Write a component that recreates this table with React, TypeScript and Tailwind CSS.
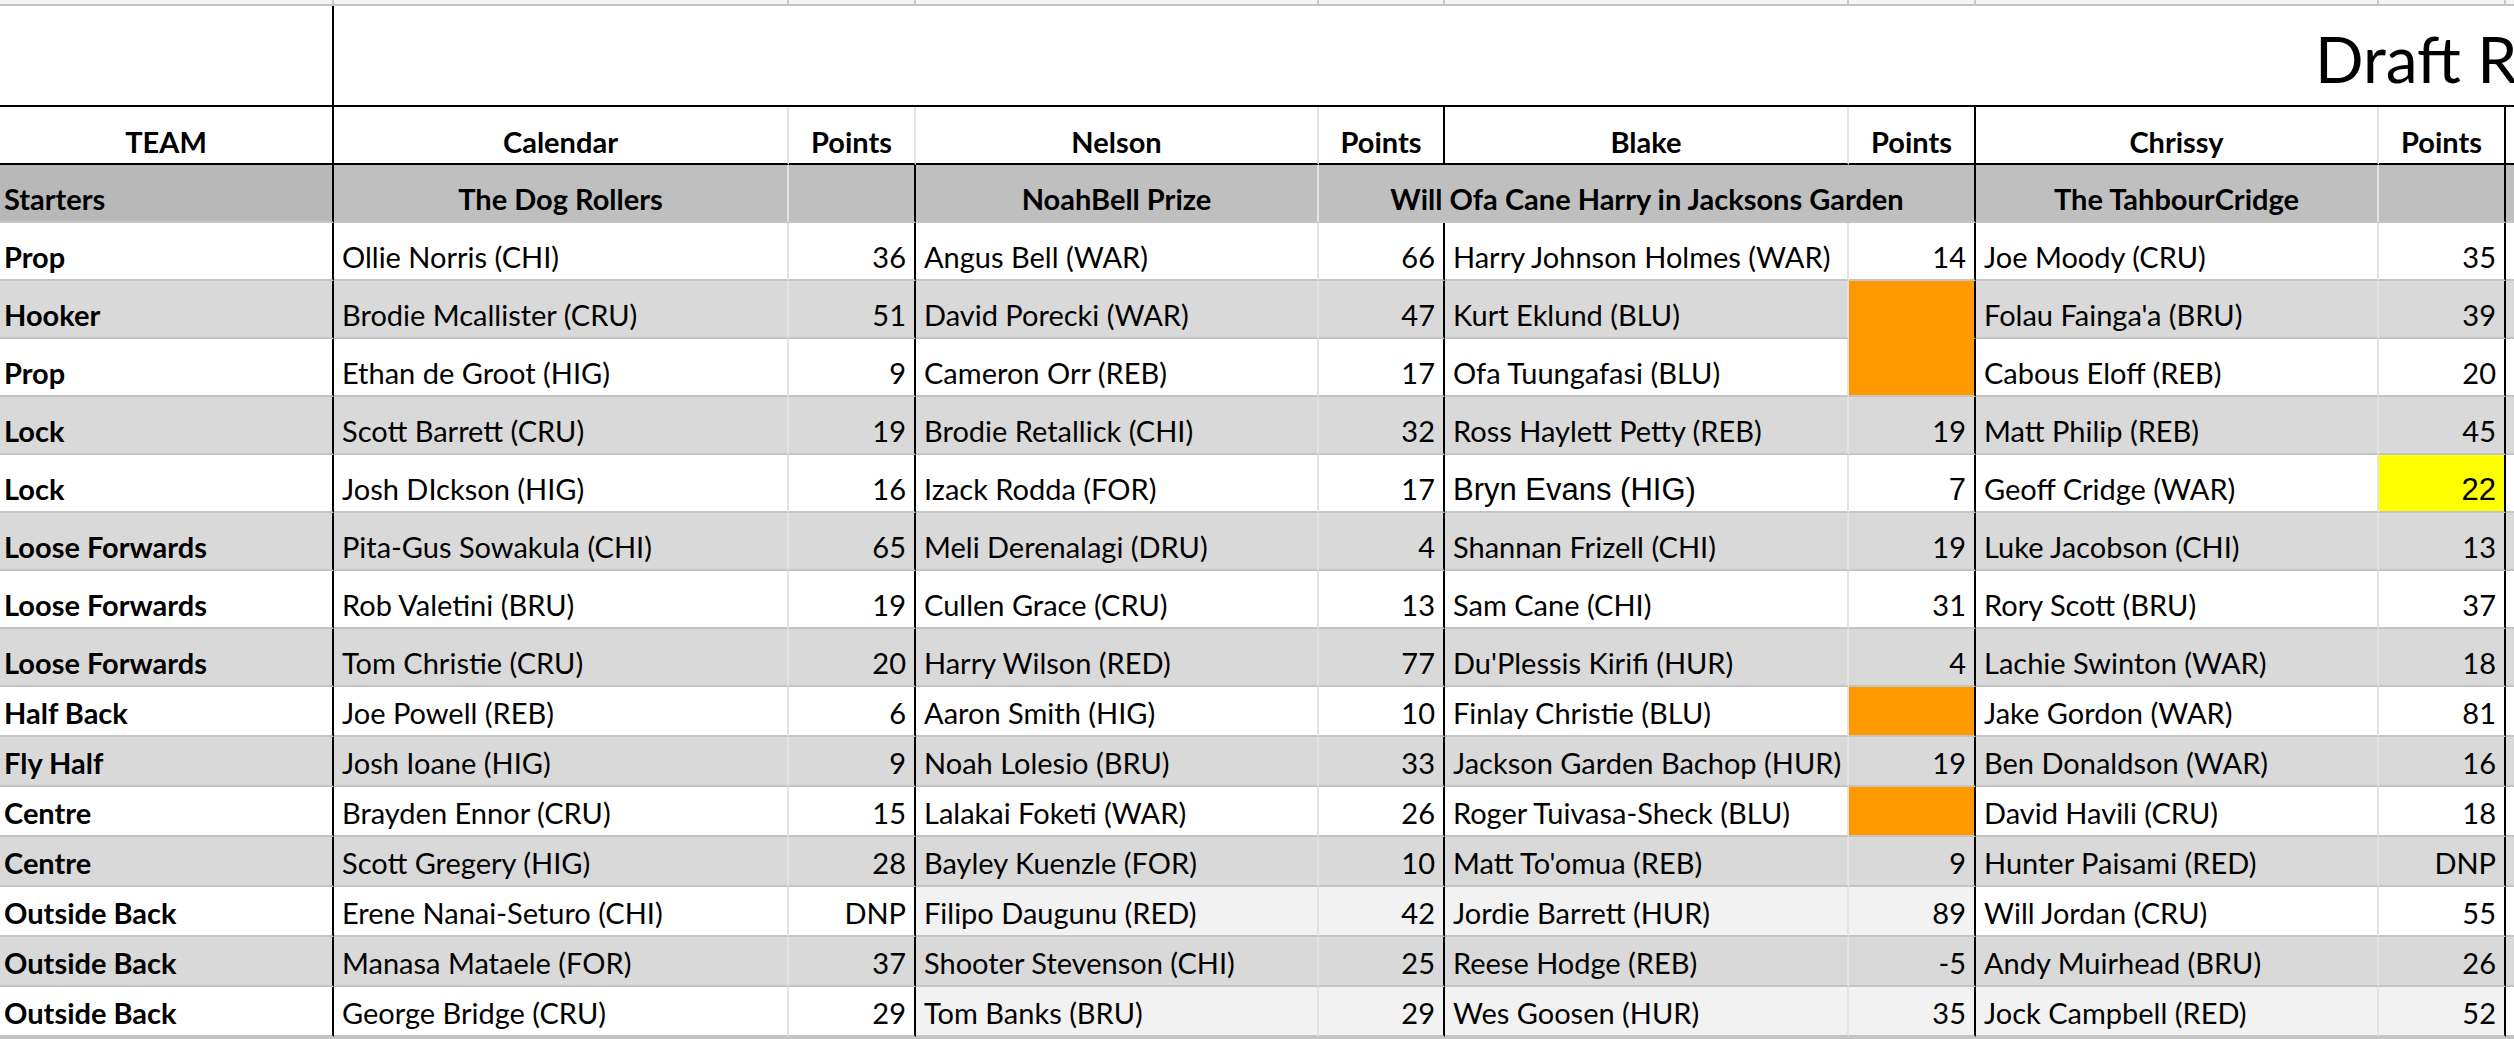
import clsx from "clsx";

// column widths, left to right (last filler column takes the rest)
const W = [
  "w-[334px]",
  "w-[455px]",
  "w-[127px]",
  "w-[403px]",
  "w-[126px]",
  "w-[404px]",
  "w-[127px]",
  "w-[403px]",
  "w-[127px]",
];

const BK = "border-r-2 border-r-black";
const LT = "border-r-2 border-r-[#e3e3e3]";

const GRID = [BK, LT, BK, LT, BK, LT, BK, LT, BK];
const HEAD = [BK, LT, LT, LT, BK, LT, BK, LT, BK];

const ARIAL = "[font-family:Liberation_Sans,Arial,sans-serif] text-[31px]";

const rows: string[][] = [
  ["Prop", "Ollie Norris (CHI)", "36", "Angus Bell (WAR)", "66", "Harry Johnson Holmes (WAR)", "14", "Joe Moody (CRU)", "35"],
  ["Hooker", "Brodie Mcallister (CRU)", "51", "David Porecki (WAR)", "47", "Kurt Eklund (BLU)", "", "Folau Fainga'a (BRU)", "39"],
  ["Prop", "Ethan de Groot (HIG)", "9", "Cameron Orr (REB)", "17", "Ofa Tuungafasi (BLU)", "", "Cabous Eloff (REB)", "20"],
  ["Lock", "Scott Barrett (CRU)", "19", "Brodie Retallick (CHI)", "32", "Ross Haylett Petty (REB)", "19", "Matt Philip (REB)", "45"],
  ["Lock", "Josh DIckson (HIG)", "16", "Izack Rodda (FOR)", "17", "Bryn Evans (HIG)", "7", "Geoff Cridge (WAR)", "22"],
  ["Loose Forwards", "Pita-Gus Sowakula (CHI)", "65", "Meli Derenalagi (DRU)", "4", "Shannan Frizell (CHI)", "19", "Luke Jacobson (CHI)", "13"],
  ["Loose Forwards", "Rob Valetini (BRU)", "19", "Cullen Grace (CRU)", "13", "Sam Cane (CHI)", "31", "Rory Scott (BRU)", "37"],
  ["Loose Forwards", "Tom Christie (CRU)", "20", "Harry Wilson (RED)", "77", "Du'Plessis Kirifi (HUR)", "4", "Lachie Swinton (WAR)", "18"],
  ["Half Back", "Joe Powell (REB)", "6", "Aaron Smith (HIG)", "10", "Finlay Christie (BLU)", "", "Jake Gordon (WAR)", "81"],
  ["Fly Half", "Josh Ioane (HIG)", "9", "Noah Lolesio (BRU)", "33", "Jackson Garden Bachop (HUR)", "19", "Ben Donaldson (WAR)", "16"],
  ["Centre", "Brayden Ennor (CRU)", "15", "Lalakai Foketi (WAR)", "26", "Roger Tuivasa-Sheck (BLU)", "", "David Havili (CRU)", "18"],
  ["Centre", "Scott Gregery (HIG)", "28", "Bayley Kuenzle (FOR)", "10", "Matt To'omua (REB)", "9", "Hunter Paisami (RED)", "DNP"],
  ["Outside Back", "Erene Nanai-Seturo (CHI)", "DNP", "Filipo Daugunu (RED)", "42", "Jordie Barrett (HUR)", "89", "Will Jordan (CRU)", "55"],
  ["Outside Back", "Manasa Mataele (FOR)", "37", "Shooter Stevenson (CHI)", "25", "Reese Hodge (REB)", "-5", "Andy Muirhead (BRU)", "26"],
  ["Outside Back", "George Bridge (CRU)", "29", "Tom Banks (BRU)", "29", "Wes Goosen (HUR)", "35", "Jock Campbell (RED)", "52"],
];

const ORANGE_ROWS = [1, 2, 8, 10];

function cellBg(i: number, c: number) {
  if (c === 6 && ORANGE_ROWS.includes(i)) return "bg-[#ff9900]";
  if (c === 8 && i === 4) return "bg-[#ffff00]";
  if ((i === 12 || i === 14) && c >= 3 && c <= 6) return "bg-[#f2f2f2]";
  if (i === 14 && c >= 7) return "bg-[#f2f2f2]";
  return i % 2 === 0 ? "bg-white" : "bg-[#d9d9d9]";
}

function DataRow({ r, i }: { r: string[]; i: number }) {
  return (
    <div className={clsx("flex", i < 8 ? "h-[58px]" : "h-[50px]")}>
      {r.map((txt, c) => (
        <div
          key={c}
          className={clsx(
            "flex shrink-0 items-end whitespace-nowrap border-b-2 pb-2",
            W[c],
            GRID[c],
            cellBg(i, c),
            c === 6 && i === 1 ? "border-b-[#ff9900]" : "border-b-[#c4c4c4]",
            c === 0 && "pl-1 font-bold",
            c > 0 && c % 2 === 1 && "pl-2",
            c > 0 && c % 2 === 0 && "justify-end pr-2",
            i === 4 && (c === 5 || c === 6 || c === 8) ? clsx(ARIAL, "pb-[6px]") : "text-[29px]"
          )}
        >
          {txt}
        </div>
      ))}
      <div className={clsx("flex-1 border-b-2 border-b-[#c4c4c4]", i % 2 === 0 ? "bg-white" : "bg-[#d9d9d9]")} />
    </div>
  );
}

export default function App() {
  const heads = ["TEAM", "Calendar", "Points", "Nelson", "Points", "Blake", "Points", "Chrissy", "Points"];

  return (
    <div className="h-[1039px] w-[2514px] overflow-hidden bg-white text-black leading-none [font-family:Lato,sans-serif]">
      {/* top strip of the sheet above */}
      <div className="flex h-[6px]">
        {W.map((w, c) => (
          <div key={c} className={clsx("shrink-0 border-b-2 border-r-2 border-b-[#c4c4c4] border-r-[#c8c8c8] bg-[#f4f5f7]", w)} />
        ))}
        <div className="flex-1 border-b-2 border-b-[#c4c4c4] bg-[#f4f5f7]" />
      </div>

      {/* title */}
      <div className="flex h-[101px]">
        <div className={clsx("shrink-0 border-b-2 border-b-black", W[0], BK)} />
        <div className="flex flex-1 items-end overflow-hidden border-b-2 border-b-black pb-[14px] pl-[1981px] whitespace-nowrap text-[64px]">
          Draft R
        </div>
      </div>

      {/* column headers */}
      <div className="flex h-[58px] font-bold text-[29px]">
        {heads.map((h, c) => (
          <div
            key={c}
            className={clsx("flex shrink-0 items-end justify-center border-b-2 border-b-black pb-[7px]", W[c], HEAD[c])}
          >
            {h}
          </div>
        ))}
        <div className="flex-1 border-b-2 border-b-black" />
      </div>

      {/* team names */}
      <div className="flex h-[58px] font-bold text-[29px] whitespace-nowrap">
        <div className={clsx("flex shrink-0 items-end border-b-2 border-b-[#c4c4c4] bg-[#b8b8b8] pb-2 pl-1", W[0], BK)}>
          Starters
        </div>
        <div className={clsx("flex shrink-0 items-end justify-center border-b-2 border-b-[#c4c4c4] bg-[#bfbfbf] pb-2", W[1], LT)}>
          The Dog Rollers
        </div>
        <div className={clsx("shrink-0 border-b-2 border-b-[#c4c4c4] bg-[#bfbfbf]", W[2], BK)} />
        <div className={clsx("flex shrink-0 items-end justify-center border-b-2 border-b-[#c4c4c4] bg-[#bfbfbf] pb-2", W[3], LT)}>
          NoahBell Prize
        </div>
        <div className={clsx("shrink-0 border-b-2 border-b-[#c4c4c4] bg-[#bfbfbf]", W[4])} />
        <div className={clsx("relative z-10 flex shrink-0 items-end justify-center border-b-2 border-b-[#c4c4c4] bg-[#bfbfbf] pb-2", W[5])}>
          Will Ofa Cane Harry in Jacksons Garden
        </div>
        <div className={clsx("shrink-0 border-b-2 border-b-[#c4c4c4] bg-[#bfbfbf]", W[6], BK)} />
        <div className={clsx("flex shrink-0 items-end justify-center border-b-2 border-b-[#c4c4c4] bg-[#bfbfbf] pb-2", W[7], LT)}>
          The TahbourCridge
        </div>
        <div className={clsx("shrink-0 border-b-2 border-b-[#c4c4c4] bg-[#bfbfbf]", W[8], BK)} />
        <div className="flex-1 border-b-2 border-b-[#c4c4c4] bg-[#bfbfbf]" />
      </div>

      {rows.map((r, i) => (
        <DataRow key={i} r={r} i={i} />
      ))}
      <div className="h-[4px] bg-[#c4c4c4]" />
    </div>
  );
}
